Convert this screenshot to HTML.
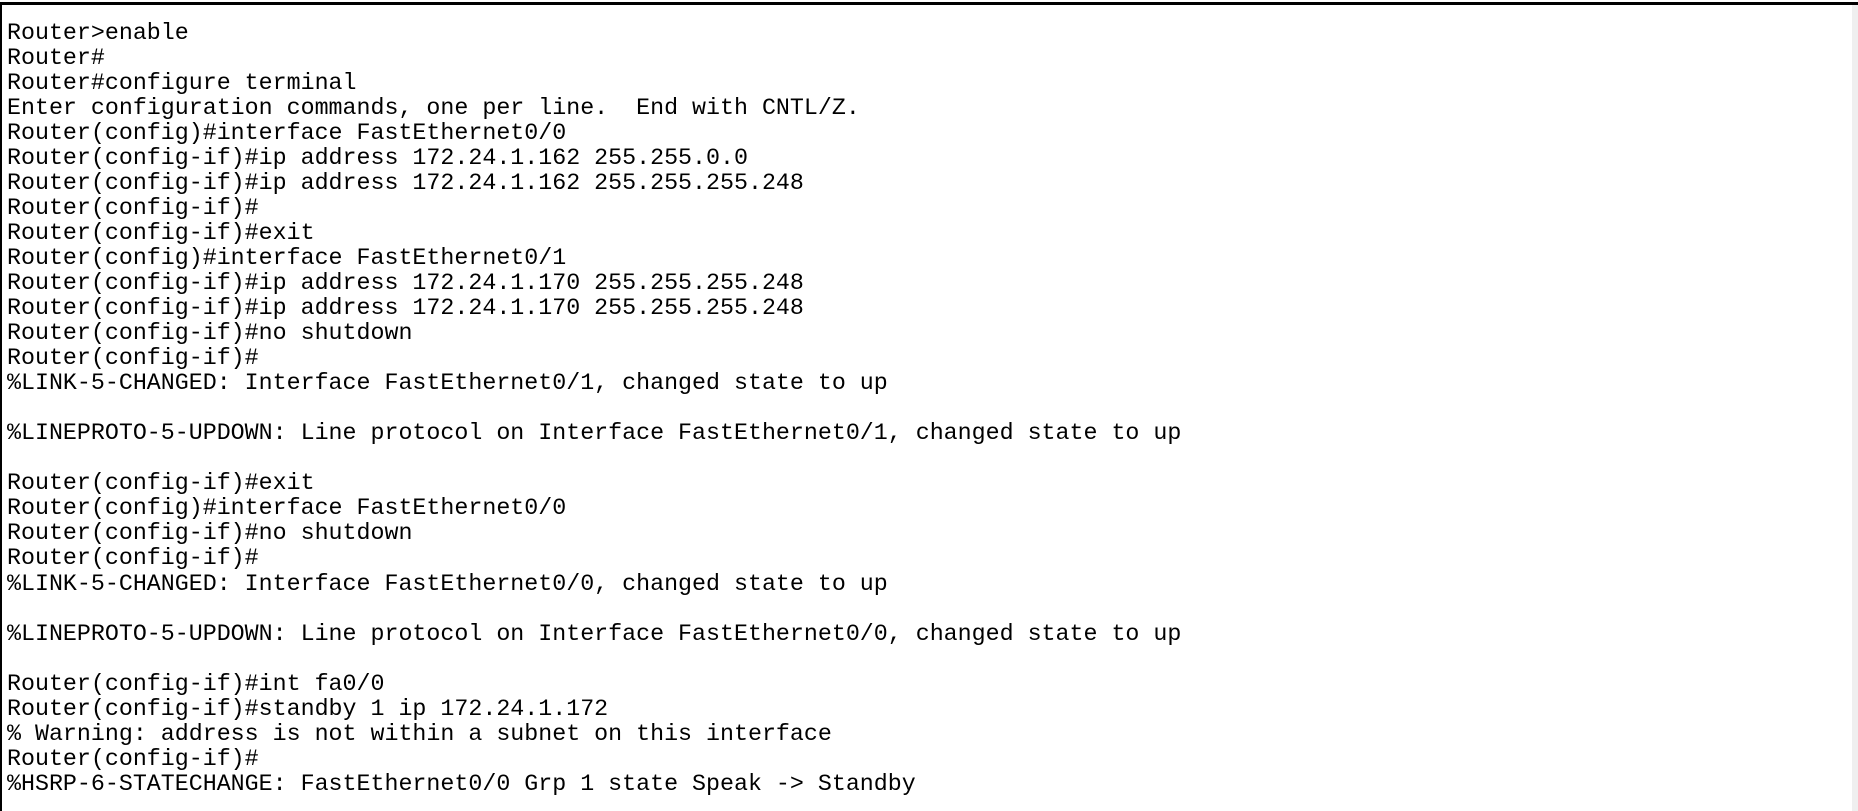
<!DOCTYPE html>
<html><head><meta charset="utf-8"><style>
html,body{margin:0;padding:0;background:#fff;width:1858px;height:811px;overflow:hidden;position:relative}
.tb{position:absolute;left:0;top:2px;width:1858px;height:3px;background:#000}
.lb{position:absolute;left:0;top:2px;width:2px;height:809px;background:#000}
.rs{position:absolute;left:1852px;top:5px;width:6px;height:806px;background:#efefef}
pre{position:absolute;left:7px;top:20.5px;margin:0;font-family:"Liberation Mono","Courier New",monospace;font-size:23.3px;line-height:25.05px;color:#000}
</style></head><body>
<div class="tb"></div><div class="lb"></div><div class="rs"></div>
<pre>Router&gt;enable
Router#
Router#configure terminal
Enter configuration commands, one per line.  End with CNTL/Z.
Router(config)#interface FastEthernet0/0
Router(config-if)#ip address 172.24.1.162 255.255.0.0
Router(config-if)#ip address 172.24.1.162 255.255.255.248
Router(config-if)#
Router(config-if)#exit
Router(config)#interface FastEthernet0/1
Router(config-if)#ip address 172.24.1.170 255.255.255.248
Router(config-if)#ip address 172.24.1.170 255.255.255.248
Router(config-if)#no shutdown
Router(config-if)#
%LINK-5-CHANGED: Interface FastEthernet0/1, changed state to up

%LINEPROTO-5-UPDOWN: Line protocol on Interface FastEthernet0/1, changed state to up

Router(config-if)#exit
Router(config)#interface FastEthernet0/0
Router(config-if)#no shutdown
Router(config-if)#
%LINK-5-CHANGED: Interface FastEthernet0/0, changed state to up

%LINEPROTO-5-UPDOWN: Line protocol on Interface FastEthernet0/0, changed state to up

Router(config-if)#int fa0/0
Router(config-if)#standby 1 ip 172.24.1.172
% Warning: address is not within a subnet on this interface
Router(config-if)#
%HSRP-6-STATECHANGE: FastEthernet0/0 Grp 1 state Speak -&gt; Standby</pre>
</body></html>
